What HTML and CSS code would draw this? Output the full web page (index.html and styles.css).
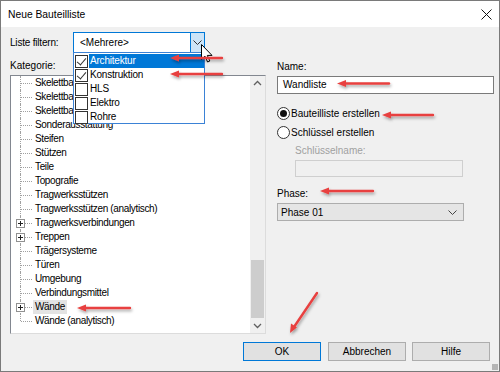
FILE: index.html
```html
<!DOCTYPE html>
<html>
<head>
<meta charset="utf-8">
<title>Neue Bauteilliste</title>
<link rel="stylesheet" href="styles.css">
</head>
<body>
<div class="window">
  <div class="titlebar">
    <span class="caption">Neue Bauteilliste</span>
    <svg class="close" width="11" height="11" viewBox="0 0 11 11"><path d="M0.5 0.5L10.5 10.5M10.5 0.5L0.5 10.5" stroke="#111" stroke-width="1"/></svg>
  </div>

  <div class="main">
    <div class="left">
      <div class="filter_row">
        <span class="filter_label">Liste filtern:</span>
        <div class="combo">
          <span class="combo_text">&lt;Mehrere&gt;</span>
          <span class="combo_btn"><svg width="9" height="5" viewBox="0 0 9 5"><path d="M0.5 0.5L4.5 4.5L8.5 0.5" fill="none" stroke="#333"/></svg></span>
        </div>
      </div>
      <div class="cat_label">Kategorie:</div>
      <div class="tree">
        <div class="items">
          <div class="row"><span class="branch"></span><span class="label">Skelettbauteile</span></div>
          <div class="row"><span class="branch"></span><span class="label">Skelettbauteile</span></div>
          <div class="row"><span class="branch"></span><span class="label">Skelettbauteile</span></div>
          <div class="row"><span class="branch"></span><span class="label">Sonderausstattung</span></div>
          <div class="row"><span class="branch"></span><span class="label">Steifen</span></div>
          <div class="row"><span class="branch"></span><span class="label">Stützen</span></div>
          <div class="row"><span class="branch"></span><span class="label">Teile</span></div>
          <div class="row"><span class="branch"></span><span class="label">Topografie</span></div>
          <div class="row"><span class="branch"></span><span class="label">Tragwerksstützen</span></div>
          <div class="row"><span class="branch"></span><span class="label">Tragwerksstützen (analytisch)</span></div>
          <div class="row"><span class="branch"><span class="plus"></span></span><span class="label">Tragwerksverbindungen</span></div>
          <div class="row"><span class="branch"><span class="plus"></span></span><span class="label">Treppen</span></div>
          <div class="row"><span class="branch"></span><span class="label">Trägersysteme</span></div>
          <div class="row"><span class="branch"></span><span class="label">Türen</span></div>
          <div class="row"><span class="branch"></span><span class="label">Umgebung</span></div>
          <div class="row"><span class="branch"></span><span class="label">Verbindungsmittel</span></div>
          <div class="row"><span class="branch"><span class="plus"></span></span><span class="label selected">Wände</span></div>
          <div class="row last"><span class="branch"></span><span class="label">Wände (analytisch)</span></div>
        </div>
        <div class="scrollbar">
          <svg class="sb_arrow" width="15" height="15" viewBox="0 0 15 15"><path d="M4 9L7.5 5.5L11 9" fill="none" stroke="#606060" stroke-width="1.3"/></svg>
          <div class="sb_track"><div class="sb_thumb"></div></div>
          <svg class="sb_arrow" width="15" height="15" viewBox="0 0 15 15"><path d="M4 6L7.5 9.5L11 6" fill="none" stroke="#606060" stroke-width="1.3"/></svg>
        </div>
      </div>
    </div>

    <div class="right">
      <div class="field_label name_label">Name:</div>
      <div class="textbox">Wandliste</div>
      <div class="radio_row first"><span class="radio checked"></span>Bauteilliste erstellen</div>
      <div class="radio_row"><span class="radio"></span>Schlüssel erstellen</div>
      <div class="field_label disabled">Schlüsselname:</div>
      <div class="textbox disabled_box"></div>
      <div class="field_label phase_label">Phase:</div>
      <div class="select">
        <span>Phase 01</span>
        <svg width="9" height="5" viewBox="0 0 9 5"><path d="M0.5 0.5L4.5 4.5L8.5 0.5" fill="none" stroke="#444"/></svg>
      </div>
    </div>
  </div>

  <div class="buttons">
    <div class="button default">OK</div>
    <div class="button">Abbrechen</div>
    <div class="button">Hilfe</div>
  </div>
  <div class="grip"></div>

  <!-- open dropdown of the filter combo -->
  <div class="dropdown">
    <div class="opt"><span class="check on"></span><span class="opt_text hot">Architektur</span></div>
    <div class="opt"><span class="check on"></span><span class="opt_text">Konstruktion</span></div>
    <div class="opt"><span class="check"></span><span class="opt_text">HLS</span></div>
    <div class="opt"><span class="check"></span><span class="opt_text">Elektro</span></div>
    <div class="opt"><span class="check"></span><span class="opt_text">Rohre</span></div>
  </div>

  <svg class="cursor" width="13" height="19" viewBox="0 0 13 19">
    <path d="M0.5 0.5L0.5 15.5L4 12.2L6.6 18L8.8 17L6.3 11.4L11 11.4Z" fill="#fff" stroke="#000" stroke-width="1"/>
  </svg>

  <!-- red annotation arrows -->
  <svg class="marks" width="500" height="372" viewBox="0 0 500 372">
    <defs>
      <filter id="sh" x="-20%" y="-50%" width="140%" height="200%">
        <feDropShadow dx="1" dy="2" stdDeviation="1.5" flood-color="#000" flood-opacity="0.35"/>
      </filter>
    </defs>
    <g stroke="#e8413f" stroke-width="2.4" fill="#e8413f" filter="url(#sh)" stroke-linecap="round">
      <line x1="222" y1="58" x2="177" y2="58"/><path d="M170 58L179 54.5L179 61.5Z" stroke="none"/>
      <line x1="222" y1="74" x2="177" y2="74"/><path d="M170 74L179 70.5L179 77.5Z" stroke="none"/>
      <line x1="389" y1="83.5" x2="344" y2="83.5"/><path d="M337 83.5L346 80L346 87Z" stroke="none"/>
      <line x1="433" y1="115" x2="389" y2="115"/><path d="M382 115L391 111.5L391 118.5Z" stroke="none"/>
      <line x1="373" y1="191" x2="327" y2="191"/><path d="M320 191L329 187.5L329 194.5Z" stroke="none"/>
      <line x1="130" y1="308" x2="84" y2="308"/><path d="M77 308L86 304.5L86 311.5Z" stroke="none"/>
      <line x1="317" y1="293" x2="294" y2="327"/><path d="M290 333L291 323.6L297 327.6Z" stroke="none"/>
    </g>
  </svg>
</div>
</body>
</html>
```

FILE: styles.css
```css
body {
    margin: 0;
    font-family: "Liberation Sans", Arial, sans-serif;
    font-size: 10px;
    color: #000;
}
.window {
    position: relative;
    width: 500px;
    height: 372px;
    box-sizing: border-box;
    border: solid 1px #7a7a7a;
    background-color: #f0f0f0;
    display: flex;
    flex-direction: column;
    overflow: hidden;
}
.titlebar {
    height: 26px;
    flex: none;
    background-color: #fff;
    display: flex;
    align-items: center;
    justify-content: space-between;
    padding: 0 7px 0 7px;
    font-size: 10.3px;
}
.main {
    display: flex;
    padding-left: 9px;
    margin-top: 5px;
}
.left {
    width: 256px;
}
.filter_row {
    display: flex;
    align-items: center;
    height: 21px;
}
.filter_label {
    width: 63px;
    letter-spacing: -0.2px;
}
.combo {
    width: 132px;
    height: 21px;
    box-sizing: border-box;
    border: solid 1px #0078d7;
    background-color: #fff;
    display: flex;
    align-items: center;
    justify-content: space-between;
}
.combo_text {
    padding-left: 6px;
}
.combo_btn {
    width: 14px;
    height: 19px;
    box-sizing: border-box;
    background-color: #cce4f7;
    border-left: solid 1px #0078d7;
    display: flex;
    align-items: center;
    justify-content: center;
}
.cat_label {
    margin-top: 6px;
    height: 13px;
    line-height: 13px;
    margin-bottom: 3px;
}
.tree {
    height: 259px;
    box-sizing: border-box;
    border: solid 1px;
    border-color: #828790 #dcdcdc #dcdcdc #828790;
    display: flex;
}
.items {
    flex: 1;
    background-color: #fff;
    letter-spacing: -0.35px;
}
.row {
    height: 14px;
    display: flex;
    align-items: center;
    white-space: nowrap;
}
.branch {
    position: relative;
    width: 22px;
    height: 14px;
    flex: none;
}
.branch::before {
    content: "";
    position: absolute;
    left: 9px;
    top: 0;
    height: 14px;
    border-left: dotted 1px #a0a0a0;
}
.branch::after {
    content: "";
    position: absolute;
    left: 10px;
    top: 7px;
    width: 11px;
    border-top: dotted 1px #a0a0a0;
}
.last .branch::before {
    height: 7px;
}
.plus {
    position: absolute;
    left: 5px;
    top: 3px;
    width: 7px;
    height: 7px;
    border: solid 1px #919191;
    background-color: #fff;
    z-index: 1;
}
.plus::before {
    content: "";
    position: absolute;
    left: 1px;
    top: 3px;
    width: 5px;
    border-top: solid 1px #222;
}
.plus::after {
    content: "";
    position: absolute;
    left: 3px;
    top: 1px;
    height: 5px;
    border-left: solid 1px #222;
}
.label {
    padding: 0 2px;
    line-height: 14px;
}
.label.selected {
    background-color: #e3e3e3;
}
.scrollbar {
    width: 15px;
    background-color: #f0f0f0;
    display: flex;
    flex-direction: column;
}
.sb_arrow {
    flex: none;
}
.sb_track {
    flex: 1;
    display: flex;
    flex-direction: column;
    justify-content: flex-end;
}
.sb_thumb {
    height: 58px;
    margin: 0 1px 0 1px;
    background-color: #cdcdcd;
}
.right {
    width: 217px;
    margin-left: 11px;
}
.field_label {
    height: 13px;
    line-height: 13px;
}
.name_label {
    margin-top: 28px;
}
.textbox {
    margin-top: 3px;
    height: 18px;
    line-height: 16px;
    box-sizing: border-box;
    border: solid 1px #7a7a7a;
    background-color: #fff;
    padding-left: 5px;
}
.radio_row {
    height: 14px;
    display: flex;
    align-items: center;
    margin-top: 5px;
}
.radio_row.first {
    margin-top: 12px;
}
.radio {
    width: 13px;
    height: 13px;
    box-sizing: border-box;
    border: solid 1px #333;
    border-radius: 50%;
    background-color: #fff;
    margin-right: 1px;
    display: flex;
    align-items: center;
    justify-content: center;
}
.radio.checked::after {
    content: "";
    width: 7px;
    height: 7px;
    border-radius: 50%;
    background-color: #111;
}
.disabled {
    color: #a0a0a0;
    margin-left: 18px;
    margin-top: 5px;
}
.disabled_box {
    margin-left: 18px;
    width: 168px;
    height: 17px;
    border-color: #cfcfcf;
    background-color: #f0f0f0;
}
.phase_label {
    margin-top: 10px;
}
.select {
    margin-top: 3px;
    width: 187px;
    height: 18px;
    box-sizing: border-box;
    border: solid 1px #adadad;
    background-color: #e5e5e5;
    display: flex;
    align-items: center;
    justify-content: space-between;
    padding: 0 6px 0 3px;
}
.buttons {
    display: flex;
    justify-content: flex-end;
    gap: 6px;
    margin-top: 8px;
    padding-right: 9px;
}
.button {
    width: 78px;
    height: 19px;
    box-sizing: border-box;
    border: solid 1px #adadad;
    background-color: #e1e1e1;
    text-align: center;
    line-height: 17px;
}
.button.default {
    border-color: #0078d7;
    margin-right: 1px;
}
.grip {
    position: absolute;
    right: 1px;
    bottom: 1px;
    width: 6px;
    height: 6px;
    background-image: radial-gradient(#b5b5b5 0.8px, transparent 1px);
    background-size: 2px 2px;
}
.dropdown {
    position: absolute;
    left: 72px;
    top: 51px;
    width: 132px;
    height: 72px;
    box-sizing: border-box;
    border: solid 1px #3b82d6;
    background-color: #fff;
    padding-top: 1px;
}
.opt {
    display: flex;
    height: 14px;
    align-items: center;
}
.check {
    width: 13px;
    height: 13px;
    box-sizing: border-box;
    border: solid 1px #333;
    margin: 0 1px 0 1px;
    flex: none;
    position: relative;
}
.check.on::after {
    content: "";
    position: absolute;
    left: 3px;
    top: 0px;
    width: 4px;
    height: 8px;
    border: solid #333;
    border-width: 0 1px 1px 0;
    transform: rotate(40deg);
}
.opt_text {
    flex: 1;
    height: 14px;
    line-height: 14px;
    padding-left: 1px;
    letter-spacing: -0.2px;
}
.opt_text.hot {
    background-color: #0078d7;
    color: #fff;
}
.cursor {
    position: absolute;
    left: 200px;
    top: 43px;
}
.marks {
    position: absolute;
    left: -1px;
    top: -1px;
    pointer-events: none;
}
```
